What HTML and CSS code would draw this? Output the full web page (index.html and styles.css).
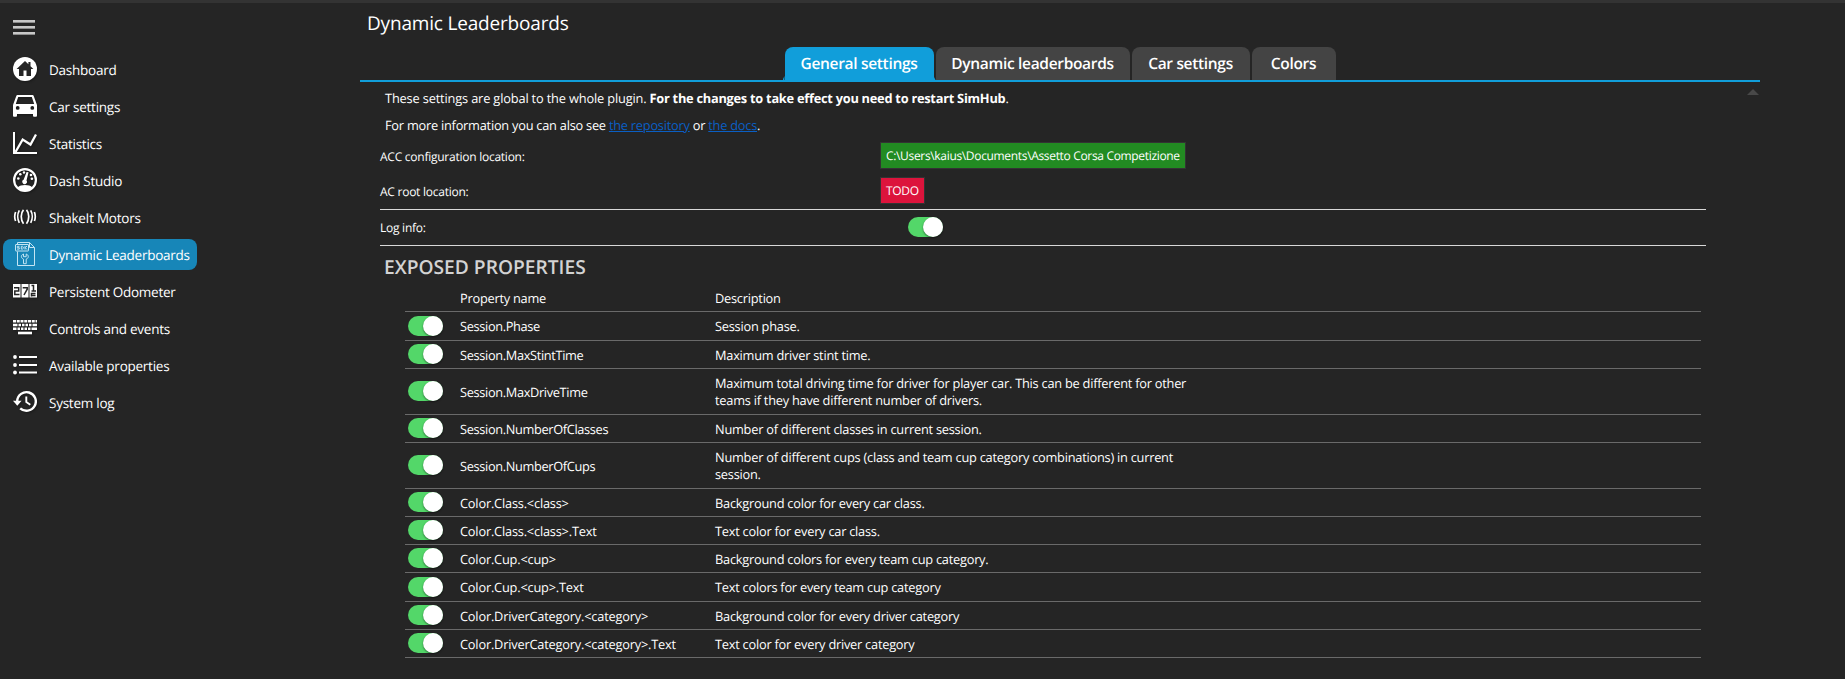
FILE: index.html
```
<!DOCTYPE html>
<html lang="en">
<head>
<meta charset="utf-8">
<title>Dynamic Leaderboards</title>
<link rel="stylesheet" href="styles.css">
</head>
<body>
<div class="app">
  <aside class="sidebar">
    <div class="menu-toggle"><i></i><i></i><i></i></div>
    <nav class="nav">
      <a class="nav-item"><svg class="icon" viewBox="0 0 24 24"><circle cx="12" cy="12" r="12" fill="#fff"/><path d="M12 4 3.6 12H6v7h4.5v-5.500h3V19H18v-7h2.400L17.500 9.200V5H15.400v2.200z" fill="#252525"/></svg><span>Dashboard</span></a>
      <a class="nav-item"><svg class="icon" viewBox="0 0 24 24"><path fill="#fff" fill-rule="evenodd" d="M5 1h14c1 0 1.600.5 1.900 1.400L24 11v10.500c0 .8-.5 1.300-1.200 1.300h-1.500c-.8 0-1.300-.5-1.300-1.300V20H4v1.500c0 .8-.5 1.300-1.300 1.300H1.200C.5 22.800 0 22.300 0 21.500V11l3.100-8.600C3.400 1.500 4 1 5 1zm.2 2L2.800 10h18.400L18.800 3zM4.700 12a1.900 1.900 0 1 0 0 3.800 1.900 1.900 0 0 0 0-3.800zm14.600 0a1.900 1.900 0 1 0 0 3.800 1.900 1.900 0 0 0 0-3.800z"/></svg><span>Car settings</span></a>
      <a class="nav-item"><svg class="icon" viewBox="0 0 24 24"><path d="M1 1v21h23" fill="none" stroke="#fff" stroke-width="2"/><path d="M2.500 21 9.700 8.500l7.800 5L23 3.500" fill="none" stroke="#fff" stroke-width="2.300"/></svg><span>Statistics</span></a>
      <a class="nav-item"><svg class="icon" viewBox="0 0 24 24"><circle cx="12" cy="12" r="10.900" fill="none" stroke="#fff" stroke-width="2.200"/><path d="M4.500 19.500C6.500 17.700 9 17 12 17s5.500.7 7.500 2.500C17.500 22 15 23 12 23s-5.500-1-7.500-3.500z" fill="#fff"/><path d="m15.500 4.300-2 8.200a2.300 2.300 0 1 1-2.900-.7l3-7.900z" fill="#fff"/><g fill="#fff"><circle cx="5.300" cy="10.500" r="1.300"/><circle cx="7.300" cy="6.300" r="1.300"/><circle cx="11" cy="4.500" r="1.200"/><circle cx="18" cy="7" r="1.300"/><circle cx="18.900" cy="10.800" r="1.300"/></g></svg><span>Dash Studio</span></a>
      <a class="nav-item"><svg class="icon" viewBox="0 0 24 24"><g fill="none" stroke="#fff" stroke-width="1.700"><path d="M10.500 4.800C7.500 8 7.500 15 10.500 18.700M13.500 4.800c3 3.200 3 10.200 0 13.900M6.300 5.300c-2 3.600-2 9 0 12.600M17.700 5.300c2 3.600 2 9 0 12.600M2.600 7c-1.200 3-1.200 6 0 9M21.400 7c1.200 3 1.200 6 0 9"/></g></svg><span>ShakeIt Motors</span></a>
      <a class="nav-item active"><svg class="icon" viewBox="0 0 24 24"><g fill="none" stroke="#c3e5f3" stroke-width="1"><path d="M4.500 9.500v14h17V5.500l-5-5H4.500v2M16.500.5v5h5"/><rect x="2.500" y="2.500" width="13" height="6.500" rx=".5"/><path d="M6.500 4.300H4.300v1.400h2v1.400H4M8.300 4.300v2.800h1.200l.7-.6V4.900l-.7-.6zM12 4v3.500M14 4l-1.700 1.700L14 7.500"/><path d="M10.500 12c-2.800 1-2.800 4 0 5.200v4.500h2.700v-4.500c2.800-1.200 2.800-4.200 0-5.200v2.700h-2.700z"/></g></svg><span>Dynamic Leaderboards</span></a>
      <a class="nav-item"><svg class="icon" viewBox="0 0 24 24"><path fill="#fff" d="M0 5h7.500v13.500H0zM8.500 5h7v13.500h-7zM16.500 5H24v13.500h-7.500z"/><path fill="none" stroke="#252525" stroke-width="1.500" d="M1 8.700h4.700v3.200H1.800v3.600h4.700M9.700 8.700h4.500v1.500L11 16M18.500 6.500h2V12M18.500 12h4.500M22.500 14.500h-4v3M18.500 16.500h4"/></svg><span>Persistent Odometer</span></a>
      <a class="nav-item"><svg class="icon" viewBox="0 0 24 24"><g fill="none" stroke="#fff" stroke-width="2.600"><path d="M0 5.300h24" stroke-dasharray="3 .75"/><path d="M0 9h4.500M5.500 9h2.500M9 9h2.500M12.500 9h2.500M16 9h2.500M19.500 9H24"/><path d="M0 12.700h3.500M4.500 12.700H7M8 12.700h2.500M11.500 12.700H14M15 12.700h2.500M18.500 12.700H24"/><path d="M5 17h14"/></g></svg><span>Controls and events</span></a>
      <a class="nav-item"><svg class="icon" viewBox="0 0 24 24"><path d="M6 4h18M6 12h18M6 19.500h18" stroke="#fff" stroke-width="2.200"/><g fill="#fff"><circle cx="2" cy="4" r="1.900"/><circle cx="2" cy="12" r="1.900"/><circle cx="2" cy="19.500" r="1.900"/></g></svg><span>Available properties</span></a>
      <a class="nav-item"><svg class="icon" viewBox="0 0 24 24"><path d="M4.200 11a9.300 9.300 0 1 1 3 7.300" fill="none" stroke="#fff" stroke-width="2.400"/><path d="M0 10.700h8.600l-4.300 5z" fill="#fff"/><path d="M13.300 6.500V12l4 2.700" fill="none" stroke="#fff" stroke-width="1.900"/></svg><span>System log</span></a>
    </nav>
  </aside>
  <main class="main">
    <h1 class="title">Dynamic Leaderboards</h1>
    <div class="tabs">
      <div class="tab tab-general active">General settings</div>
      <div class="tab tab-boards">Dynamic leaderboards</div>
      <div class="tab tab-cars">Car settings</div>
      <div class="tab tab-colors">Colors</div>
    </div>
    <div class="panel">
      <svg class="scroll-up" viewBox="0 0 12 6"><path d="M0 6 6 0l6 6z" fill="#484848"/></svg>
      <p class="note"><span class="note-lead">These settings are global to the whole plugin.</span> <b>For the changes to take effect you need to restart SimHub</b>.</p>
      <p class="note">For more information you can also see <a class="link">the repository</a> or <a class="link">the docs</a>.</p>
      <div class="field first"><span class="label">ACC configuration location:</span><span class="path ok">C:\Users\kaius\Documents\Assetto Corsa Competizione</span></div>
      <div class="field ruled"><span class="label">AC root location:</span><span class="path bad">TODO</span></div>
      <div class="field ruled"><span class="label">Log info:</span><span class="switch log"></span></div>
      <h2 class="heading">EXPOSED PROPERTIES</h2>
      <div class="props">
        <div class="row head"><span></span><span class="name-head">Property name</span><span class="desc">Description</span></div>
        <div class="row roomy"><span class="switch"></span><span class="name">Session.Phase</span><span class="desc">Session phase.</span></div>
        <div class="row"><span class="switch"></span><span class="name">Session.MaxStintTime</span><span class="desc">Maximum driver stint time.</span></div>
        <div class="row double"><span class="switch"></span><span class="name">Session.MaxDriveTime</span><span class="desc">Maximum total driving time for driver for player car. This can be different for other<br>teams if they have different number of drivers.</span></div>
        <div class="row"><span class="switch"></span><span class="name">Session.NumberOfClasses</span><span class="desc">Number of different classes in current session.</span></div>
        <div class="row double"><span class="switch"></span><span class="name">Session.NumberOfCups</span><span class="desc">Number of different cups (class and team cup category combinations) in current<br>session.</span></div>
        <div class="row"><span class="switch"></span><span class="name color">Color.Class.&lt;class&gt;</span><span class="desc">Background color for every car class.</span></div>
        <div class="row"><span class="switch"></span><span class="name color">Color.Class.&lt;class&gt;.Text</span><span class="desc">Text color for every car class.</span></div>
        <div class="row"><span class="switch"></span><span class="name color">Color.Cup.&lt;cup&gt;</span><span class="desc">Background colors for every team cup category.</span></div>
        <div class="row roomy"><span class="switch"></span><span class="name color">Color.Cup.&lt;cup&gt;.Text</span><span class="desc">Text colors for every team cup category</span></div>
        <div class="row"><span class="switch"></span><span class="name color">Color.DriverCategory.&lt;category&gt;</span><span class="desc">Background color for every driver category</span></div>
        <div class="row"><span class="switch"></span><span class="name color">Color.DriverCategory.&lt;category&gt;.Text</span><span class="desc">Text color for every driver category</span></div>
      </div>
    </div>
  </main>
</div>
</body>
</html>
```
FILE: styles.css
```
* { box-sizing: border-box; }

body {
  margin: 0;
  height: 679px;
  overflow: hidden;
  background: #252525;
  color: #fff;
  font: 12.8px/17px "Open Sans", "Noto Sans", sans-serif;
  white-space: nowrap;
  text-rendering: geometricPrecision;
}

.app {
  display: flex;
  height: 679px;
  border-top: 3px solid #333;
}

/* Sidebar */
.sidebar { width: 360px; flex: none; }

.menu-toggle {
  display: flex;
  flex-direction: column;
  gap: 3px;
  width: 22px;
  margin: 17px 0 19px 13px;
}
.menu-toggle i {
  height: 3px;
  background: #c8c8c8;
  border-bottom: 1px solid #8c8c8c;
}

.nav {
  display: flex;
  flex-direction: column;
  align-items: flex-start;
  gap: 6px;
  padding-left: 3px;
}
.nav-item {
  display: flex;
  align-items: center;
  gap: 12px;
  height: 31px;
  padding: 0 6px 0 10px;
  border-radius: 8px;
  font-size: 13.5px;
  letter-spacing: -0.25px;
}
.nav-item.active { background: #1786b8; width: 194px; }
.nav-item span { padding-top: 2px; }
.icon {
  width: 24px;
  height: 24px;
  margin-bottom: 1px;
  filter: drop-shadow(1px 1px 1px rgba(0, 0, 0, .35));
}
.nav-item.active .icon { filter: none; }

/* Page header */
.main { width: 1400px; }

.title {
  margin: 0;
  padding: 1px 0 4px 7px;
  font-size: 19px;
  font-weight: 400;
  line-height: 39px;
  letter-spacing: -0.18px;
}

.tabs {
  display: flex;
  justify-content: center;
  gap: 2px;
  height: 35px;
  border-bottom: 2px solid #119eda;
}
.tab {
  height: 33px;
  border-radius: 8px 8px 0 0;
  background: #444;
  font-size: 15.5px;
  font-weight: 600;
  line-height: 33px;
  letter-spacing: -0.32px;
  text-align: center;
}
.tab-general { width: 149px; }
.tab-boards { width: 194px; }
.tab-cars { width: 118px; }
.tab-colors { width: 84px; }
.tab.active { position: relative; background: #119eda; }
.tab.active::before,
.tab.active::after {
  content: "";
  position: absolute;
  bottom: 0;
  width: 2px;
  height: 4px;
  background: #119eda;
}
.tab.active::before { left: -2px; clip-path: polygon(100% 0, 100% 100%, 0 100%); }
.tab.active::after { right: -2px; clip-path: polygon(0 0, 100% 100%, 0 100%); }

/* Settings panel */
.panel { position: relative; padding: 8px 54px 0 20px; }
.scroll-up {
  position: absolute;
  top: 7px;
  right: 1px;
  width: 12px;
  height: 6px;
}

.note { margin: 0 0 10px 5px; letter-spacing: -0.25px; }
.note-lead { letter-spacing: -0.16px; }
.note + .note { margin-bottom: 4px; letter-spacing: -0.24px; }
.link { color: #0a5fc4; text-decoration: underline; }

.field {
  display: grid;
  grid-template-columns: 500px 1fr;
  align-items: center;
  height: 35px;
  font-size: 12px;
}
.field.ruled { height: 36px; border-bottom: 1px solid #d8d8d8; }
.field.ruled:has(.path) { height: 37px; }
.label { letter-spacing: -0.25px; }
.first .label { padding-top: 2px; }
.path {
  justify-self: start;
  padding: 3px 5px;
  border: 1px solid #333;
  line-height: 19px;
  letter-spacing: -0.33px;
}
.ok { background: #228b22; }
.bad { background: #dc143c; margin-bottom: 1px; }

/* On/off switch */
.switch {
  display: block;
  width: 35px;
  height: 20px;
  margin-bottom: 1px;
  padding-left: 15px;
  border-radius: 10px;
  background: #53d769;
}
.switch::after {
  content: "";
  display: block;
  width: 20px;
  height: 20px;
  border-radius: 50%;
  background: #fff;
  box-shadow: 0 1px 2px rgba(0, 0, 0, .5);
}
.switch.log { margin-left: 28px; }

/* Property table */
.heading {
  margin: 0;
  padding-left: 4px;
  color: #d3d3d3;
  font-size: 19.2px;
  font-weight: 600;
  line-height: 41px;
}
.props { width: 1296px; margin-left: 25px; }
.row {
  display: grid;
  grid-template-columns: 52px 255px 1fr;
  align-items: center;
  height: 28px;
  padding-left: 3px;
  border-bottom: 1px solid #6a6a6a;
}
.row.head { height: 25px; padding-bottom: 2px; }
.row.roomy { height: 29px; }
.row.roomy .switch { margin-bottom: 0; }
.row.double { height: 46px; }
.row:not(.head):not(.roomy) .name,
.row:not(.head):not(.roomy):not(.double) .desc { padding-top: 1px; }
.name { letter-spacing: -0.35px; }
.name.color { letter-spacing: -0.2px; }
.desc, .name-head { letter-spacing: -0.24px; }
```
